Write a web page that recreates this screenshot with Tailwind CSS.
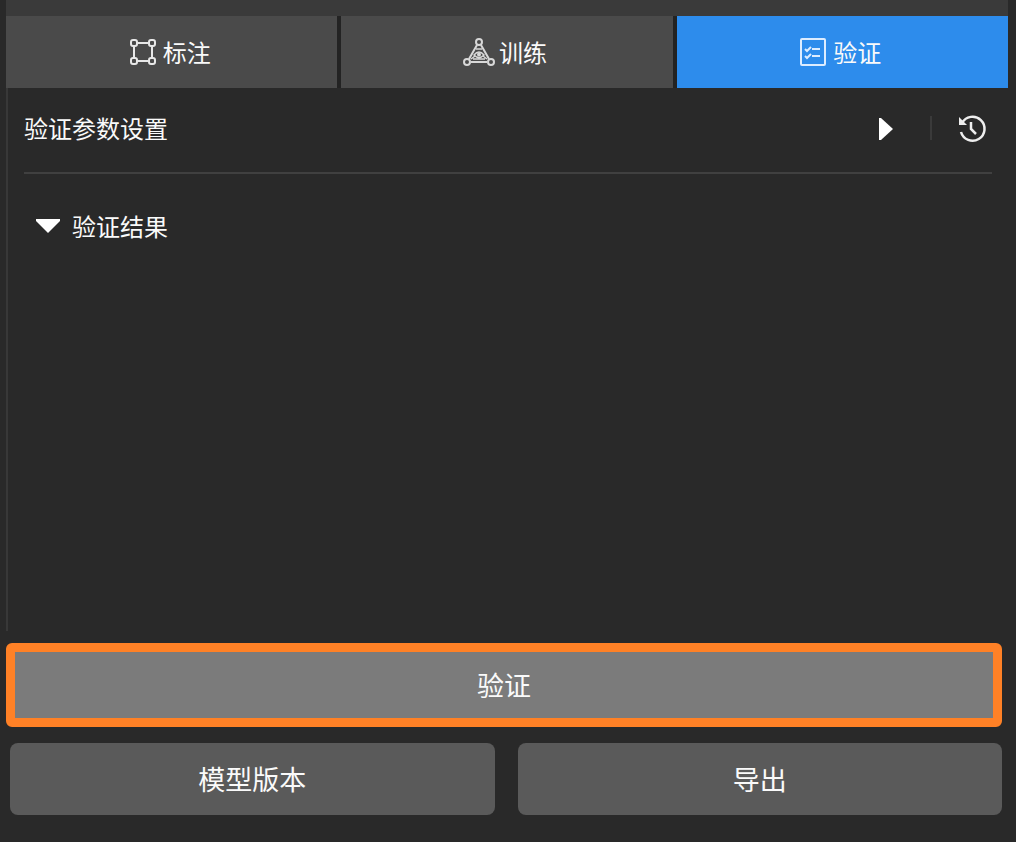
<!DOCTYPE html>
<html lang="zh-CN">
<head>
<meta charset="utf-8">
<meta name="viewport" content="width=device-width, initial-scale=1">
<title>验证</title>
<script src="https://cdn.jsdelivr.net/npm/@tailwindcss/browser@4"></script>
</head>
<body class="flex min-h-screen flex-col bg-[#292929] pr-2 pl-1.5 font-['Noto_Sans_CJK_SC',sans-serif] text-2xl text-[#fafafa]">
  <nav class="border-t-16 border-[#3a3a3a]">
    <div class="grid h-18 grid-cols-3 gap-1 bg-[#232323]">
      <button class="flex items-center justify-center gap-1.5 bg-[#4a4a4a] pr-1">
        <svg class="size-7" viewBox="0 0 28 28" fill="none" stroke="#e8e8e8" stroke-width="2">
          <path d="M8 5h12M8 23h12M5 8v12M23 8v12"/>
          <rect x="2" y="2" width="6" height="6" rx="2"/><rect x="20" y="2" width="6" height="6" rx="2"/><rect x="2" y="20" width="6" height="6" rx="2"/><rect x="20" y="20" width="6" height="6" rx="2"/>
        </svg>
        <span>标注</span>
      </button>
      <button class="flex items-center justify-center gap-1 bg-[#4a4a4a] pr-1">
        <svg class="h-7 w-8" viewBox="0 0 32 28" fill="none" stroke="#d8d8d8" stroke-width="2">
          <path d="M14 7 6 21M18 7l8 14M8 24h16"/>
          <path d="M11 17q5-6 10 0q-5 5-10 0zM13 11h6M8 21l4-3M24 21l-4-3M10 21h12" stroke-width="1.5"/>
          <circle cx="16" cy="16.500" r="2" fill="#d8d8d8" stroke="none"/>
          <circle cx="16" cy="4" r="3"/><circle cx="4" cy="24" r="3"/><circle cx="28" cy="24" r="3"/>
        </svg>
        <span>训练</span>
      </button>
      <button class="flex items-center justify-center gap-1.5 bg-[#2d8cec] pr-1" aria-current="page">
        <svg class="size-7" viewBox="0 0 28 28" fill="none" stroke="#dcecff" stroke-width="2">
          <rect x="2" y="1" width="24" height="26" rx="1"/>
          <path d="m6 11 2 2 4-4M13 11h8M6 18l2 2 4-4M13 18h8"/>
        </svg>
        <span>验证</span>
      </button>
    </div>
  </nav>

  <main class="mb-3 flex-1 border-l-2 border-[#383838] pr-4 pl-4">
    <header class="flex h-[86px] items-center border-b-2 border-[#404040] pb-1">
      <h1 class="flex-1">验证参数设置</h1>
      <button class="mr-9" aria-label="运行">
        <svg class="h-7 w-4" viewBox="0 0 16 28"><path d="M1 4v22h2L15 15 3 4z" fill="#fff"/></svg>
      </button>
      <span class="mr-6 h-6 w-0.5 bg-[#3a3a3a]"></span>
      <button class="mr-1" aria-label="历史记录">
        <svg class="size-8" viewBox="0 0 32 32" fill="none" stroke="#eee" stroke-width="2.500">
          <path d="M6 11A12 12 0 1 1 5 20"/>
          <path d="M15 10v7l5 5"/>
          <path d="M3 5v8h8z" fill="#eee" stroke="none"/>
        </svg>
      </button>
    </header>
    <button class="mt-9 ml-3 flex items-center gap-3" aria-expanded="true">
      <svg class="h-4 w-6" viewBox="0 0 24 16"><path d="M0 1v2l12 12L24 3V1z" fill="#fff"/></svg>
      <span>验证结果</span>
    </button>
  </main>

  <footer class="pr-1.5 pb-[27px] text-[27px]">
    <button class="block h-[84px] w-full rounded-md border-9 border-[#ff8126] bg-[#7b7b7b]">验证</button>
    <div class="mt-4 grid grid-cols-2 gap-[23px] pl-1">
      <button class="h-18 rounded-lg bg-[#5a5a5a]">模型版本</button>
      <button class="h-18 rounded-lg bg-[#5a5a5a]">导出</button>
    </div>
  </footer>
</body>
</html>
